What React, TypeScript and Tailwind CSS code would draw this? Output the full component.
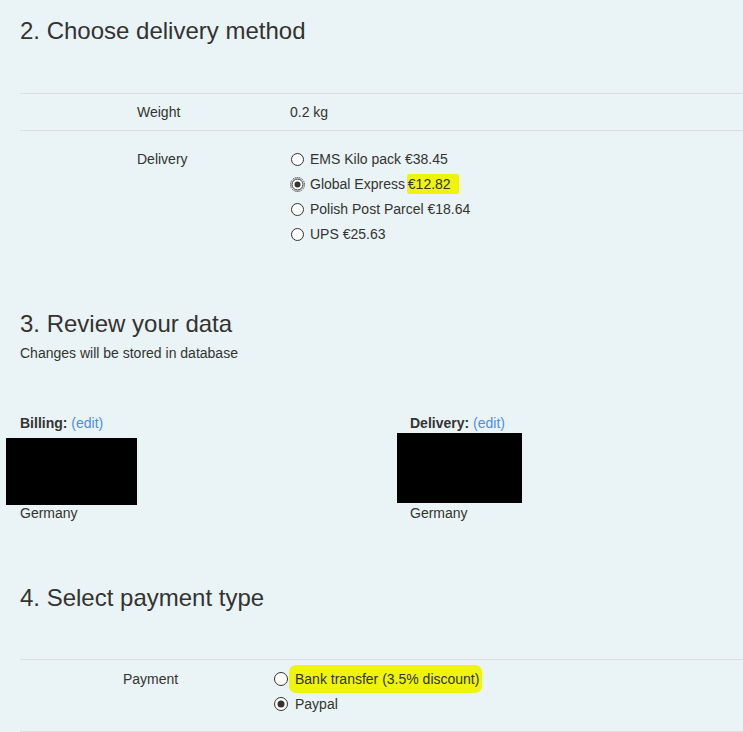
import React from "react";

function Radio({
  checked = false,
  focused = false,
  size = 15,
}: {
  checked?: boolean;
  focused?: boolean;
  size?: number;
}) {
  const c = size / 2;
  return (
    <svg width={size} height={size} viewBox={`0 0 ${size} ${size}`} className="shrink-0">
      {focused && (
        <circle cx={c} cy={c} r={c - 0.5} fill="none" stroke="#222" strokeWidth="1" strokeDasharray="1 1" />
      )}
      <circle cx={c} cy={c} r={focused ? c - 2 : c - 1.5} fill="#fff" stroke="#333" strokeWidth="1" />
      {checked && <circle cx={c} cy={c} r={size > 15 ? 3.5 : 3} fill="#333" />}
    </svg>
  );
}

function Option({
  children,
  checked,
  focused,
  size,
  gap = "gap-[5px]",
}: {
  children: React.ReactNode;
  checked?: boolean;
  focused?: boolean;
  size?: number;
  gap?: string;
}) {
  return (
    <label className={`flex items-center h-[16px] leading-[16px] ${gap}`}>
      <Radio checked={checked} focused={focused} size={size} />
      <span className="whitespace-nowrap">{children}</span>
    </label>
  );
}

export default function App() {
  return (
    <div
      className="min-h-[732px] w-full overflow-hidden bg-[#eaf3f5] text-[#333] text-[14px] pl-[20px]"
      style={{ fontFamily: '"Liberation Sans", Arial, sans-serif' }}
    >
      {/* Delivery method */}
      <h2 className="pt-[18px] text-[24px] leading-[26px] font-normal">2. Choose delivery method</h2>
      <div className="mt-[49px] border-t border-[#d9dfe0]">
        <div className="flex py-[10px] leading-[16px] border-b border-[#d9dfe0]">
          <div className="w-[270px] pl-[117px]">Weight</div>
          <div>0.2 kg</div>
        </div>
        <div className="flex pt-[20px] leading-[16px]">
          <div className="w-[270px] pl-[117px]">Delivery</div>
          <div className="flex flex-col gap-[9px]">
            <Option>EMS Kilo pack €38.45</Option>
            <Option checked focused>
              Global Express{" "}
              <span className="bg-[#eef40a] rounded-[2px] pl-[1px] pr-[8px] py-[2px] -ml-[2px]">€12.82</span>
            </Option>
            <Option>Polish Post Parcel €18.64</Option>
            <Option>UPS €25.63</Option>
          </div>
        </div>
      </div>

      {/* Review data */}
      <h2 className="mt-[69px] text-[24px] leading-[26px] font-normal">3. Review your data</h2>
      <p className="mt-[8px] leading-[16px]">Changes will be stored in database</p>

      <div className="mt-[54px] flex">
        <div className="w-[390px]">
          <div className="leading-[16px]">
            <b>Billing:</b> <a className="text-[#4a90d9]">(edit)</a>
          </div>
          <div className="mt-[7px] -ml-[14px] w-[131px] h-[67px] bg-black" />
          <div className="leading-[16px]">Germany</div>
        </div>
        <div>
          <div className="leading-[16px]">
            <b>Delivery:</b> <a className="text-[#4a90d9]">(edit)</a>
          </div>
          <div className="mt-[2px] -ml-[13px] w-[125px] h-[70px] bg-black" />
          <div className="mt-[2px] leading-[16px]">Germany</div>
        </div>
      </div>

      {/* Payment type */}
      <h2 className="mt-[64px] text-[24px] leading-[26px] font-normal">4. Select payment type</h2>
      <div className="mt-[48px] border-t border-[#d9dfe0]">
        <div className="flex pt-[11px] pb-[19px] leading-[16px] border-b border-[#d9dfe0]">
          <div className="w-[253px] pl-[103px]">Payment</div>
          <div className="flex flex-col gap-[9px]">
            <Option size={16} gap="gap-[6px]">
              <span className="bg-[#eef40a] rounded-[7px] pl-[6px] pr-[3px] py-[6px] -ml-[6px]">
                Bank transfer (3.5% discount)
              </span>
            </Option>
            <Option checked size={16} gap="gap-[6px]">
              Paypal
            </Option>
          </div>
        </div>
      </div>
    </div>
  );
}
